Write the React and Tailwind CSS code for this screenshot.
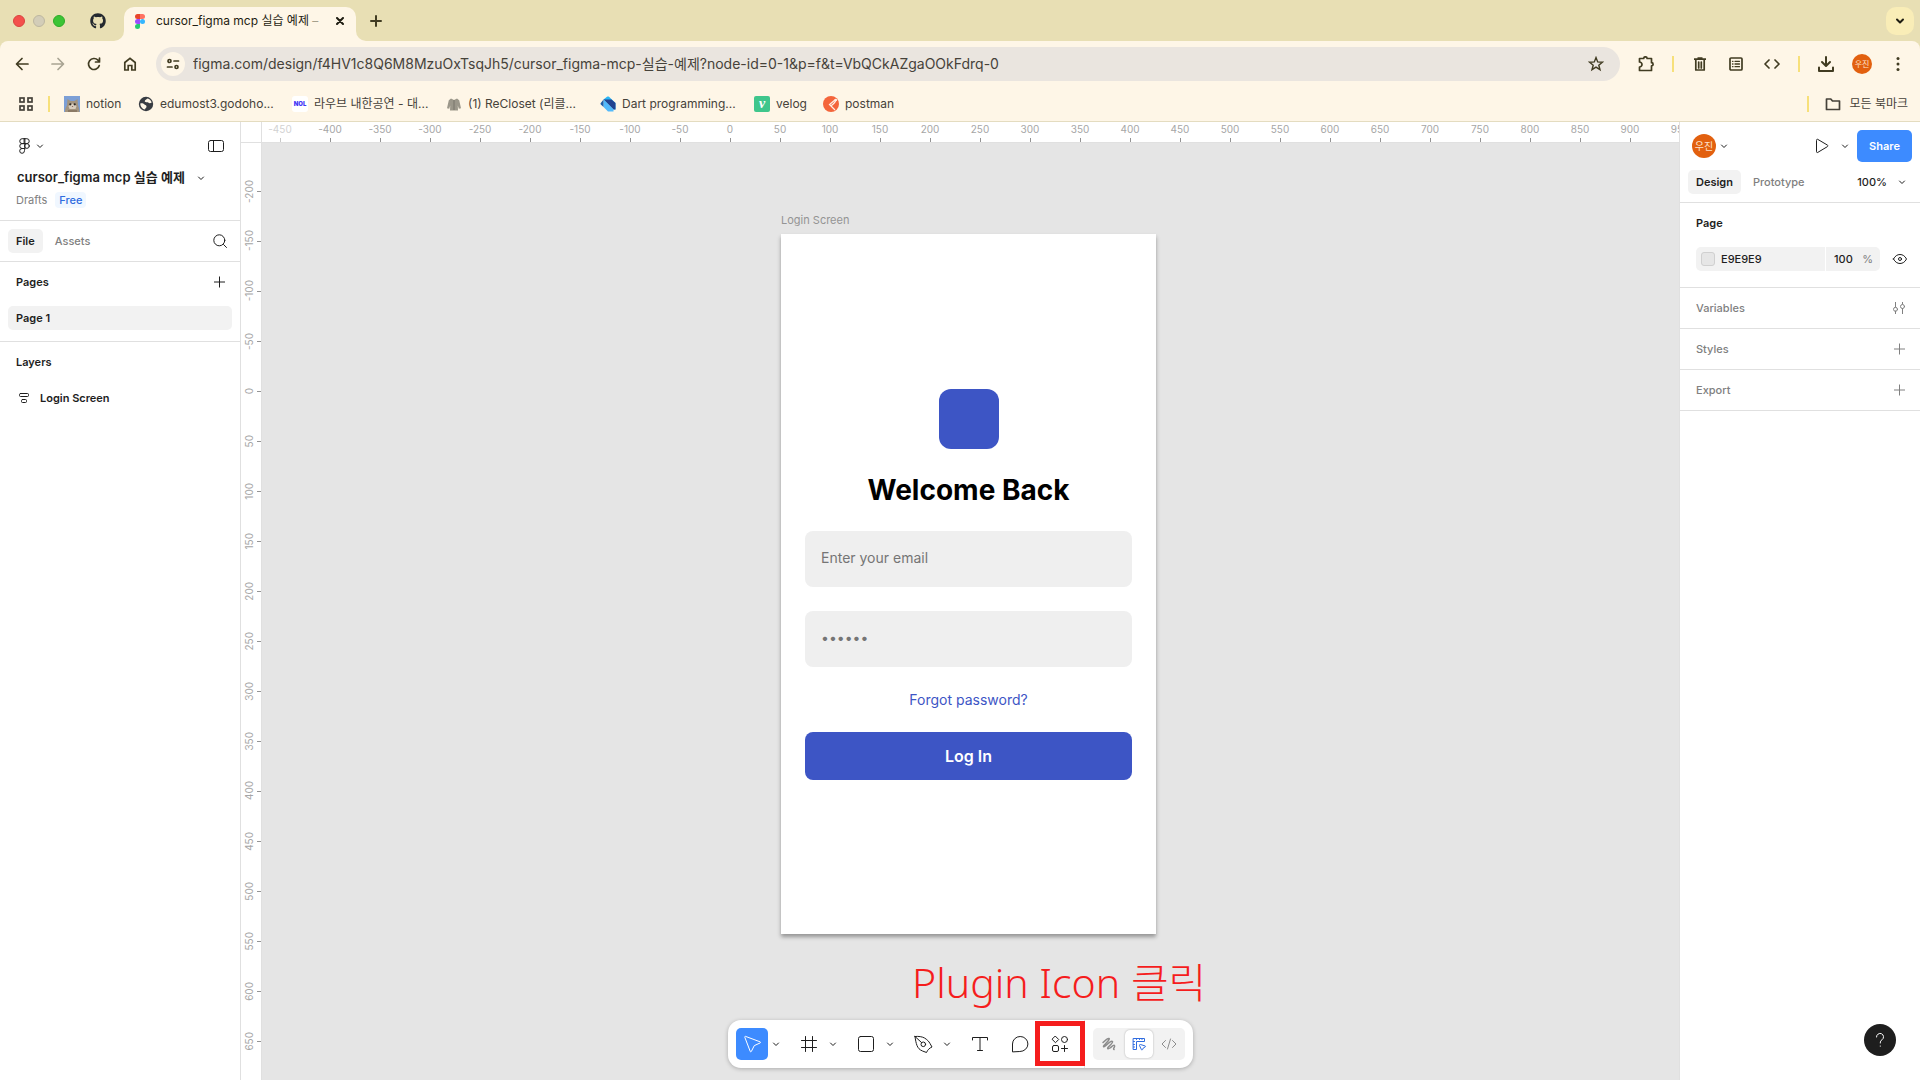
import React from 'react';
import { FaGithub } from 'react-icons/fa';

const xTicks = Array.from({ length: 29 }, (_, i) => -450 + i * 50);
const yTicks = Array.from({ length: 18 }, (_, i) => -200 + i * 50);

const Icon = ({ size = 24, width = 1, className = '', children }) => (
  <svg
    width={size}
    height={size}
    viewBox={`0 0 ${size} ${size}`}
    fill="none"
    stroke="currentColor"
    strokeWidth={width}
    strokeLinecap="round"
    strokeLinejoin="round"
    aria-hidden="true"
    className={`shrink-0 ${className}`}
  >
    {children}
  </svg>
);

const Chevron = ({ className = '' }) => (
  <Icon size={8} className={className}>
    <path d="M1.500 3 4 5.500 6.500 3" />
  </Icon>
);

const Plus = () => (
  <Icon size={12}>
    <path d="M6.500 .5v11M1 6h11" strokeLinecap="butt" />
  </Icon>
);

const FigmaColor = () => (
  <svg width="10" height="15" viewBox="0 0 10 15" aria-hidden="true" className="shrink-0">
    <path d="M2.500 0H5v5H2.500a2.500 2.500 0 0 1 0-5z" fill="#e8462b" />
    <path d="M5 0h2.500a2.500 2.500 0 0 1 0 5H5z" fill="#ff7262" />
    <path d="M2.500 5H5v5H2.500a2.500 2.500 0 0 1 0-5z" fill="#9b4dff" />
    <circle cx="7.500" cy="7.500" r="2.500" fill="#35b6ff" />
    <path d="M2.500 10H5v2.500A2.500 2.500 0 1 1 2.500 10z" fill="#24cb71" />
  </svg>
);

const Avatar = ({ className }) => (
  <span
    className={`flex shrink-0 items-center justify-center rounded-full bg-[#e2600f] text-[#fde3cd] ${className}`}
  >
    우진
  </span>
);

const TabStrip = () => (
  <div className="flex h-[41px] items-end bg-[#e8dfb4] pl-[13px] pr-1.5">
    <div className="flex h-[41px] items-center gap-2">
      <span className="h-3 w-3 rounded-full border border-[#d9443f] bg-[#f4504c]" />
      <span className="h-3 w-3 rounded-full border border-[#bdb7a0] bg-[#d3cdb8]" />
      <span className="h-3 w-3 rounded-full border border-[#2eab28] bg-[#3cc435]" />
    </div>
    <div className="ml-[25px] flex h-[41px] items-center text-[#24292f]">
      <FaGithub className="h-4 w-4" />
    </div>
    <span className="ml-2 h-2.5 w-2.5 bg-[#fef6e7]">
      <span className="block h-2.5 w-2.5 rounded-br-[10px] bg-[#e8dfb4]" />
    </span>
    <div className="flex h-[34px] w-[232px] items-center rounded-t-[10px] bg-[#fef6e7] pb-1.5 pl-[11px] pr-2.5">
      <FigmaColor />
      <span className="ml-[11px] flex-1 overflow-hidden whitespace-nowrap text-xs text-[#1f1d12]">
        cursor_figma mcp 실습 예제 <span className="text-[#a5a08c]">–</span>
      </span>
      <button type="button" aria-label="Close tab" className="flex h-3 w-3 items-center justify-center text-[#1f1d12]">
        <Icon size={8} width={2}>
          <path d="m1 1 6 6M7 1 1 7" />
        </Icon>
      </button>
    </div>
    <span className="h-2.5 w-2.5 bg-[#fef6e7]">
      <span className="block h-2.5 w-2.5 rounded-bl-[10px] bg-[#e8dfb4]" />
    </span>
    <button type="button" aria-label="New tab" className="ml-1 flex h-[41px] items-center text-[#413c22]">
      <Icon size={12} width={2}>
        <path d="M6 1v10M1 6h10" />
      </Icon>
    </button>
    <button
      type="button"
      aria-label="Search tabs"
      className="mb-1.5 ml-auto flex h-7 w-7 items-center justify-center rounded-[10px] bg-[#f9edb7] text-[#1f1d12]"
    >
      <Icon size={10} width={2}>
        <path d="m2 3.500 3 3 3-3" />
      </Icon>
    </button>
  </div>
);

const navIcons = [
  { name: 'Back', tone: 'text-[#413c22]', art: <path d="M14 8H3M8 2.500 2.500 8 8 13.500" /> },
  { name: 'Forward', tone: 'text-[#a9a493]', art: <path d="M2 8h11M8 2.500 13.500 8 8 13.500" /> },
  { name: 'Reload', tone: 'text-[#413c22]', art: <path d="M13.300 9.500A5.500 5.500 0 1 1 12 4.200l1.500 1.500M13.500 2v4h-4" /> },
  { name: 'Home', tone: 'text-[#413c22]', art: <path d="M2.800 6.500 8 2.300l5.200 4.200v7.500H9.800V9.500H6.200V14H2.800z" strokeLinejoin="miter" /> },
];

const AddressBar = () => (
  <div className="flex h-[46px] items-center px-3.5 text-[#413c22]">
    <div className="flex gap-5">
      {navIcons.map((item) => (
        <button key={item.name} type="button" aria-label={item.name} className={item.tone}>
          <Icon size={16} width={1.7}>{item.art}</Icon>
        </button>
      ))}
    </div>
    <div className="ml-[18px] flex h-[34px] flex-1 items-center rounded-full bg-[#eae5df] pl-[5px] pr-4">
      <button type="button" aria-label="Site information" className="flex h-6 w-6 items-center justify-center rounded-full bg-[#fef6e7]">
        <Icon size={14} width={1.7}>
          <circle cx="3.500" cy="4" r="1.500" />
          <path d="M8 4h4.500M1.500 10H6" />
          <circle cx="10.500" cy="10" r="1.500" />
        </Icon>
      </button>
      <input
        type="text"
        aria-label="Address"
        readOnly
        value="figma.com/design/f4HV1c8Q6M8MzuOxTsqJh5/cursor_figma-mcp-실습-예제?node-id=0-1&p=f&t=VbQCkAZgaOOkFdrq-0"
        className="ml-2 min-w-0 flex-1 bg-transparent text-sm text-[#46423a] outline-none"
      />
      <button type="button" aria-label="Bookmark this page">
        <Icon size={16} width={1.4}>
          <path d="m8 1.600 1.700 4.300 4.700.3-3.600 3 1.200 4.500L8 11.200l-4 2.500 1.200-4.500-3.600-3 4.700-.3z" strokeLinejoin="miter" />
        </Icon>
      </button>
    </div>
    <div className="ml-[18px] flex items-center gap-[18px]">
      <button type="button" aria-label="Extensions">
        <Icon size={16} width={1.7}>
          <path d="M1.500 2.500h4.200a1.700 1.700 0 0 1 3.400 0h4.400v4.200a1.600 1.600 0 0 1 0 3.200v4.600h-12V11a2.300 2.300 0 0 0 0-5z" />
        </Icon>
      </button>
      <span className="h-4 w-0.5 bg-[#f7e07a]" />
      <button type="button" aria-label="Delete">
        <Icon size={16} width={1.7}>
          <path d="M2 3.200h12M5.500 2h5" strokeLinecap="butt" />
          <path d="M3.800 4v10h8.400V4" />
          <path d="M6.700 6v6M9.300 6v6" />
        </Icon>
      </button>
      <button type="button" aria-label="Reading list" className="ml-0.5">
        <Icon size={16} width={1.7}>
          <rect x="2" y="2" width="12" height="12" rx="1" />
          <path d="M4.500 5.300h.5M7 5.300h4.500M4.500 8h.5M7 8h4.500M4.500 10.700h.5M7 10.700h4.500" strokeWidth="1.300" />
        </Icon>
      </button>
      <button type="button" aria-label="View source" className="ml-0.5">
        <Icon size={16} width={1.7}>
          <path d="M5 4 1 8l4 4M11 4l4 4-4 4" />
        </Icon>
      </button>
      <span className="h-4 w-0.5 bg-[#f7e07a]" />
      <button type="button" aria-label="Downloads">
        <Icon size={16} width={2}>
          <path d="M8 1v8M4 6l4 4 4-4" />
          <path d="M1 11.500V15h14v-3.500" />
        </Icon>
      </button>
      <Avatar className="h-5 w-5 text-[8px]" />
      <button type="button" aria-label="Menu">
        <svg width="16" height="16" fill="currentColor" aria-hidden="true">
          <circle cx="8" cy="2.500" r="1.500" />
          <circle cx="8" cy="8" r="1.500" />
          <circle cx="8" cy="13.500" r="1.500" />
        </svg>
      </button>
    </div>
  </div>
);

const CatIcon = () => (
  <svg width="16" height="16" aria-hidden="true">
    <rect width="16" height="16" fill="#7c9fd6" />
    <path d="M1 16c0-4 1.500-5 2-7L3.500 3l3 2h4l3-2 .5 6c.5 2 1.500 4 1.500 7z" fill="#a3947f" />
    <path d="M4.500 10 8.500 7.500l4 2.500-1 3h-6z" fill="#d8cdbd" />
    <circle cx="6.300" cy="8.300" r="1.100" fill="#2d2a26" />
    <circle cx="10.700" cy="8.300" r="1.100" fill="#2d2a26" />
    <path d="M7.700 10h1.600l-.8 1z" fill="#6b3f36" />
    <path d="M4 14h9v2H4z" fill="#8b7a66" />
  </svg>
);

const GlobeIcon = () => (
  <svg width="16" height="16" viewBox="0 0 16 16" aria-hidden="true">
    <circle cx="8" cy="8" r="7.200" fill="#383c43" />
    <path
      d="M2.300 7.500C4 7 5.500 7.500 6.500 8.500s2 .5 2 2-1.200 1.500-1.500 3C4.500 13.200 2.300 10.800 2.300 7.500zM9.500 2.400c2.200.5 3.800 2 4.200 4.200-1.200 1-2.700.9-3.500 0S8 6.800 7 5.800s.5-2 2.500-3.400z"
      fill="#fef6e7"
    />
  </svg>
);

const NolIcon = () => (
  <span className="flex h-4 w-4 items-center justify-center rounded-[3px] bg-white text-[6px] font-black text-[#4338f5]">
    NOL
  </span>
);

const HoodieIcon = () => (
  <svg width="16" height="16" viewBox="0 0 16 16" fill="#9b978a" aria-hidden="true">
    <path d="M5 2.500 8 4l3-1.500 2.200 1.700 1.800 8-2.200.6-1-3.300.2 5H4l.2-5-1 3.300-2.200-.6 1.800-8z" />
    <path d="M8 4v10" stroke="#6f6c62" strokeWidth=".8" />
  </svg>
);

const DartIcon = () => (
  <svg width="16" height="16" viewBox="0 0 16 16" aria-hidden="true">
    <path d="M3.500 3.500 7 .8c.6-.5 1.400-.6 2 0L15.500 7v6.500h-2z" fill="#29b6f6" />
    <path d="M3.500 3.500h8L15.500 7v6.500h-2z" fill="#22428f" />
    <path d="M3.500 3.500v7.500l4.500 4.500h5.500v-2z" fill="#52b9fb" />
    <path d="M3.500 3.500v7.500L.8 8.600c-.5-.5-.5-1 0-1.600z" fill="#1f5fa8" />
  </svg>
);

const VelogIcon = () => (
  <span className="flex h-4 w-4 items-center justify-center rounded-[2px] bg-[#3fc68c] font-['Liberation_Serif'] text-sm leading-none font-bold text-white italic">
    v
  </span>
);

const PostmanIcon = () => (
  <svg width="16" height="16" viewBox="0 0 16 16" aria-hidden="true">
    <circle cx="8" cy="8" r="8" fill="#f4653b" />
    <path d="m12.500 3.500-6 5L12 14M13 4c-1 3-3 4-4.500 5.500" fill="none" stroke="#fef0e6" strokeWidth="1.200" />
    <circle cx="12.800" cy="4" r="1.300" fill="#fef0e6" />
  </svg>
);

const bookmarks = [
  { name: 'notion', icon: CatIcon, width: 'w-[74px]' },
  { name: 'edumost3.godoho...', icon: GlobeIcon, width: 'w-[154px]' },
  { name: '라우브 내한공연 - 대...', icon: NolIcon, width: 'w-[154px]' },
  { name: '(1) ReCloset (리클...', icon: HoodieIcon, width: 'w-[154px]' },
  { name: 'Dart programming...', icon: DartIcon, width: 'w-[154px]' },
  { name: 'velog', icon: VelogIcon, width: 'w-[69px]' },
  { name: 'postman', icon: PostmanIcon, width: 'w-[90px]' },
];

const BookmarksBar = () => (
  <div className="flex h-[34px] items-center pl-[18px] pr-3 text-xs text-[#46423a]">
    <button type="button" aria-label="Apps">
      <Icon size={16} width={1.7}>
        <rect x="2" y="2" width="4" height="4" strokeLinejoin="miter" />
        <rect x="10" y="2" width="4" height="4" strokeLinejoin="miter" />
        <rect x="2" y="10" width="4" height="4" strokeLinejoin="miter" />
        <rect x="10" y="10" width="4" height="4" strokeLinejoin="miter" />
      </Icon>
    </button>
    <span className="mx-3.5 h-4 w-0.5 bg-[#f7e07a]" />
    {bookmarks.map((item) => (
      <a key={item.name} href="#" className={`flex items-center gap-1.5 whitespace-nowrap ${item.width}`}>
        <item.icon />
        {item.name}
      </a>
    ))}
    <span className="ml-auto h-4 w-0.5 bg-[#f7e07a]" />
    <a href="#" className="ml-4 flex items-center gap-2">
      <Icon size={16} width={1.7}>
        <path d="M1.500 3h4.300l1.700 2h7v8.500h-13z" />
      </Icon>
      모든 북마크
    </a>
  </div>
);

const LeftPanel = () => (
  <aside className="flex w-[241px] shrink-0 flex-col border-r border-[#e0e0e0] bg-white">
    <div className="h-[99px] border-b border-[#e0e0e0]">
      <div className="flex h-12 items-center justify-between px-4">
        <button type="button" aria-label="Main menu" className="flex items-center gap-1">
          <Icon size={16}>
            <path d="M8.500.7H6.200a2.400 2.400 0 0 0 0 4.900h2.300zM8.500.7h2.300a2.400 2.400 0 0 1 0 4.900H8.500zM8.500 5.600H6.200a2.400 2.400 0 0 0 0 4.900h2.300zM8.500 10.500H6.200a2.400 2.400 0 1 0 2.300 2.400z" />
            <circle cx="10.900" cy="8" r="2.400" />
          </Icon>
          <Chevron />
        </button>
        <button type="button" aria-label="Toggle panels">
          <Icon size={16}>
            <rect x=".5" y="2.500" width="15" height="11" rx="2" />
            <path d="M5.500 2.500v11" />
          </Icon>
        </button>
      </div>
      <button type="button" className="flex h-4 items-center pl-[17px] text-[13px] font-semibold">
        cursor_figma mcp 실습 예제
        <Chevron className="ml-3" />
      </button>
      <div className="mt-1.5 flex items-center gap-2 pl-4 text-[11px] leading-4">
        <span className="text-[#808080]">Drafts</span>
        <span className="rounded bg-[#f0f7ff] px-1 font-medium text-[#2f6ce0]">Free</span>
      </div>
    </div>
    <div className="flex h-[41px] items-center border-b border-[#e0e0e0] pl-2 pr-3 text-[11px]">
      <button type="button" className="h-6 rounded-[5px] bg-[#f2f2f2] px-2 font-semibold">File</button>
      <button type="button" className="ml-1 h-6 px-2 font-medium text-[#808080]">Assets</button>
      <button type="button" aria-label="Search" className="ml-auto">
        <Icon size={16}>
          <circle cx="7.300" cy="7.300" r="5.500" />
          <path d="m11.500 11.500 3 3" />
        </Icon>
      </button>
    </div>
    <div className="border-b border-[#e0e0e0] px-2 pb-[11px] text-[11px] font-semibold">
      <div className="mb-1 flex h-10 items-center justify-between pl-2 pr-[7px]">
        <h2>Pages</h2>
        <button type="button" aria-label="Add page">
          <Plus />
        </button>
      </div>
      <button type="button" className="block h-6 w-full rounded-[5px] bg-[#f2f2f2] px-2 text-left">Page 1</button>
    </div>
    <div className="px-4 text-[11px] font-semibold">
      <h2 className="flex h-10 items-center">Layers</h2>
      <button type="button" className="mt-0.5 flex h-7 items-center gap-2">
        <Icon size={16}>
          <rect x="3.500" y="3.500" width="9" height="3" rx="1" />
          <rect x="5.500" y="9.500" width="5" height="3" rx="1" />
        </Icon>
        Login Screen
      </button>
    </div>
  </aside>
);

const LoginFrame = () => (
  <section className="absolute top-[71px] left-[519px] w-[375px]">
    <p className="h-5 text-[11px] leading-3 text-[#949494]">Login Screen</p>
    <form className="flex min-h-[700px] flex-col items-center justify-center gap-6 bg-white px-6 shadow-[0_3px_4px_rgba(0,0,0,0.35)]">
      <div className="h-15 w-15 rounded-xl bg-[#3d55c5]" />
      <h1 className="text-[28px] leading-[34px] font-bold text-black">Welcome Back</h1>
      <input
        type="email"
        aria-label="Email"
        placeholder="Enter your email"
        className="h-14 w-full rounded-lg bg-[#efefef] px-4 pb-0.5 text-sm outline-none placeholder:text-[#757575]"
      />
      <input
        type="password"
        aria-label="Password"
        placeholder="••••••"
        className="h-14 w-full rounded-lg bg-[#efefef] px-4 pb-0.5 text-sm outline-none placeholder:text-[#757575]"
      />
      <a href="#" className="text-sm leading-[17px] text-[#3d55c5]">Forgot password?</a>
      <button type="button" className="h-12 w-full rounded-lg bg-[#3d55c5] font-semibold text-white">Log In</button>
    </form>
  </section>
);

const Canvas = () => (
  <main className="flex min-w-0 flex-1 flex-col">
    <div className="flex h-[21px] border-b border-[#e0e0e0] bg-white text-[10px] text-[#a6a6a6]">
      <span className="w-[21px] shrink-0 border-r border-[#e0e0e0]" />
      <div className="flex min-w-0 flex-1 overflow-hidden">
        <div className="-ml-[7px] flex shrink-0">
          {xTicks.map((tick, i) => (
            <span
              key={tick}
              className={`flex w-[50px] flex-col items-center justify-between leading-[15px] ${i === 0 ? 'opacity-50' : ''}`}
            >
              {tick}
              <span className="h-1 w-px bg-[#949494]" />
            </span>
          ))}
        </div>
      </div>
    </div>
    <div className="flex min-h-0 flex-1">
      <div className="flex w-[21px] shrink-0 flex-col overflow-hidden border-r border-[#e0e0e0] bg-white pt-[23px] text-[10px] text-[#a6a6a6]">
        {yTicks.map((tick) => (
          <span key={tick} className="flex h-[50px] shrink-0 items-center justify-between">
            <span className="w-4 rotate-180 text-center leading-4 [writing-mode:vertical-rl]">{tick}</span>
            <span className="h-px w-1 bg-[#949494]" />
          </span>
        ))}
      </div>
      <div className="relative flex-1 overflow-hidden bg-[#e5e5e5]">
        <LoginFrame />
        <p className="absolute top-[809px] left-[650px] text-[41px] leading-[60px] font-light whitespace-nowrap text-[#f51d1d] font-['Noto_Sans','Noto_Sans_CJK_KR',sans-serif]">
          Plugin Icon 클릭
        </p>
      </div>
    </div>
  </main>
);

const RightPanel = () => (
  <aside className="w-[241px] shrink-0 border-l border-[#e0e0e0] bg-white text-[11px]">
    <div className="h-[81px] border-b border-[#e0e0e0]">
      <div className="flex h-12 items-center pl-3 pr-2">
        <Avatar className="h-6 w-6 text-[10px]" />
        <Chevron className="ml-1" />
        <button type="button" aria-label="Present" className="ml-auto">
          <Icon size={16}>
            <path d="M2.500 2.200c0-.9.500-1.200 1.300-.8l9.500 5.600c.8.500.8 1.200 0 1.700l-9.500 5.700c-.8.500-1.300.1-1.300-.8z" />
          </Icon>
        </button>
        <Chevron className="ml-[11px]" />
        <button type="button" className="ml-2 h-8 w-[55px] rounded-[5px] bg-[#3d8bff] font-semibold text-white">Share</button>
      </div>
      <div className="flex h-6 items-center pl-2 pr-3.5">
        <button type="button" className="h-6 rounded-[5px] bg-[#f2f2f2] px-2 font-semibold">Design</button>
        <button type="button" className="ml-1 h-6 px-2 font-medium text-[#808080]">Prototype</button>
        <button type="button" className="ml-auto flex items-center gap-[11px] font-medium">
          100%
          <Chevron />
        </button>
      </div>
    </div>
    <div className="border-b border-[#e0e0e0] pr-3 pb-4 pl-4">
      <h2 className="mb-1 flex h-10 items-center font-semibold">Page</h2>
      <div className="flex items-center">
        <div className="flex h-6 w-[130px] items-center gap-1.5 rounded-l-[5px] border-r border-white bg-[#f2f2f2] pl-[5px]">
          <span className="h-3.5 w-3.5 shrink-0 rounded-[3px] border border-[#d0d0d0] bg-[#e6e6e6]" />
          <input type="text" aria-label="Page color" defaultValue="E9E9E9" className="min-w-0 flex-1 bg-transparent font-medium outline-none" />
        </div>
        <label className="flex h-6 w-[54px] items-center rounded-r-[5px] bg-[#f2f2f2] pr-[7px] pl-2">
          <input type="text" aria-label="Opacity" defaultValue="100" className="min-w-0 flex-1 bg-transparent font-medium outline-none" />
          <span className="text-[#808080]">%</span>
        </label>
        <button type="button" aria-label="Toggle visibility" className="ml-auto">
          <Icon size={16}>
            <path d="M1.500 8C3 5 5.300 3.500 8 3.500S13 5 14.500 8C13 11 10.700 12.500 8 12.500S3 11 1.500 8z" />
            <circle cx="8" cy="8" r="1.500" />
          </Icon>
        </button>
      </div>
    </div>
    <div className="text-[#808080]">
      {['Variables', 'Styles', 'Export'].map((name) => (
        <div key={name} className="flex h-[41px] items-center justify-between border-b border-[#e0e0e0] pr-[15px] pl-4 font-medium">
          <h2>{name}</h2>
          <button type="button" aria-label={`Add ${name}`}>
            {name === 'Variables' ? (
              <Icon size={12}>
                <path d="M2.500 0v5M2.500 9v3M9.500 0v2M9.500 6.500V12" />
                <circle cx="2.500" cy="7.300" r="2" />
                <circle cx="9.500" cy="4.500" r="2" />
              </Icon>
            ) : (
              <Plus />
            )}
          </button>
        </div>
      ))}
    </div>
  </aside>
);

const tools = [
  { name: 'Frame', art: <path d="M8.500 4.500v15M15.500 4.500v15M4.500 8.500h15M4.500 15.500h15" /> },
  { name: 'Rectangle', art: <rect x="4.500" y="4.500" width="15" height="15" rx="2" /> },
  {
    name: 'Pen',
    art: (
      <>
        <path d="M4 4.500c3.500-.5 7.500.3 9.500 1.500 2.500 1.500 4.500 3.500 5.500 5.500l2 3.500c-2.500 1-4.500 3-5.500 5.500l-4-1.500c-3-1.200-4.500-3-5.500-5.500C5 11 4.500 8 4 4.500z" />
        <path d="m4 4.500 6.500 6" />
        <circle cx="12.300" cy="12.300" r="2.300" />
      </>
    ),
  },
];

const Toolbar = () => (
  <div className="absolute inset-x-0 bottom-3 flex justify-center">
    <div className="flex h-12 items-center rounded-[13px] bg-white px-2 shadow-[0_1px_4px_rgba(0,0,0,0.25)]">
      <button type="button" aria-label="Move" className="flex h-8 w-8 items-center justify-center rounded-[5px] bg-[#3d8bff] text-white">
        <Icon>
          <path d="M4.800 5.300c-.3-.7.200-1.100.8-.9l14.400 5.400c.7.300.7.900 0 1.200l-5.700 2.600-3 5.900c-.3.600-.9.600-1.100-.1z" />
        </Icon>
      </button>
      <Chevron className="mx-1" />
      {tools.map((tool) => (
        <div key={tool.name} className="flex items-center">
          <button type="button" aria-label={tool.name} className="ml-[13px] flex h-8 w-6 items-center">
            <Icon>{tool.art}</Icon>
          </button>
          <Chevron className="mr-1 ml-2" />
        </div>
      ))}
      <button type="button" aria-label="Text" className="ml-[13px]">
        <Icon>
          <path d="M4.500 8V5.500h15V8M12 5.500v13M9.500 18.500h5" />
        </Icon>
      </button>
      <button type="button" aria-label="Comment" className="ml-4">
        <Icon>
          <path d="M4.500 19.500V12a7.700 7.500 0 1 1 7.700 7.500z" />
        </Icon>
      </button>
      <div className="relative ml-4 flex h-12 items-center border-r border-[#e6e6e6] pr-3">
        <button type="button" aria-label="Actions">
          <Icon>
            <path d="M7.500 4.300 10.700 7.500 7.500 10.700 4.300 7.500z" />
            <circle cx="16.500" cy="7.500" r="3" />
            <rect x="4.500" y="13.500" width="6" height="6" rx="1.500" />
            <path d="M16.500 13.500v6M13.500 16.500h6" />
          </Icon>
        </button>
        {/* highlight box around the plugin button */}
        <span className="pointer-events-none absolute top-px -left-[13px] h-[45px] w-[50px] border-5 border-[#f51d1d]" />
      </div>
      <div className="ml-2 flex h-8 w-[92px] items-center justify-between rounded-[5px] bg-[#f2f2f2] px-1 text-[#8c8c8c]">
        <button type="button" aria-label="Draw">
          <Icon>
            <path
              d="M6 10.500C8 8.500 10.500 6 12 6.500S8.500 11.500 7 13.500s.5 1.500 2.500-.5 5-4.500 6-3.500-3.500 4.500-4.500 6 .5 1.500 2 .5 3.500-3.500 4.500-2.500-2 3.500-.5 4"
              strokeWidth="1.500"
            />
          </Icon>
        </button>
        <button type="button" aria-label="Design" className="flex h-7 w-7 items-center justify-center rounded-[5px] bg-white text-[#2f6ce0] shadow-[0_0_2px_rgba(0,0,0,0.3)]">
          <Icon>
            <path d="M6.500 6.500h11v3h-8v8h-3zM9.500 6.500v1M12.500 6.500v1M15 6.500v1M6.500 9.500h1M6.500 12.500h1M6.500 15h1" />
            <path d="M12.500 13.300c-.1-.6.300-1 .9-.8l4.600 1.400c.7.200.7.800.1 1.100l-1.700.9-.9 1.700c-.3.600-1 .6-1.200-.1z" />
          </Icon>
        </button>
        <button type="button" aria-label="Dev mode">
          <Icon>
            <path d="M8.500 8.500 5 12l3.500 3.500M15.500 8.500 19 12l-3.500 3.500M13.500 7l-3 10" />
          </Icon>
        </button>
      </div>
    </div>
  </div>
);

const App = () => (
  <div className="relative flex min-h-screen flex-col overflow-hidden bg-white font-['Inter','Noto_Sans_CJK_KR',sans-serif] text-[#1e1e1e]">
    <header className="border-b border-[#e4dcc0] bg-[#e8dfb4]">
      <TabStrip />
      <div className="rounded-t-lg bg-[#fef6e7]">
        <AddressBar />
        <BookmarksBar />
      </div>
    </header>
    <div className="flex flex-1">
      <LeftPanel />
      <Canvas />
      <RightPanel />
    </div>
    <Toolbar />
    <button
      type="button"
      aria-label="Help"
      className="absolute right-6 bottom-6 flex h-8 w-8 items-center justify-center rounded-full bg-[#1e1e1e] text-white"
    >
      <Icon size={16}>
        <path d="M4.500 5a3.500 3.500 0 1 1 5.600 2.700C8.700 8.700 8.300 9.300 8.300 11M8.300 14v.2" />
      </Icon>
    </button>
  </div>
);

export default App;
